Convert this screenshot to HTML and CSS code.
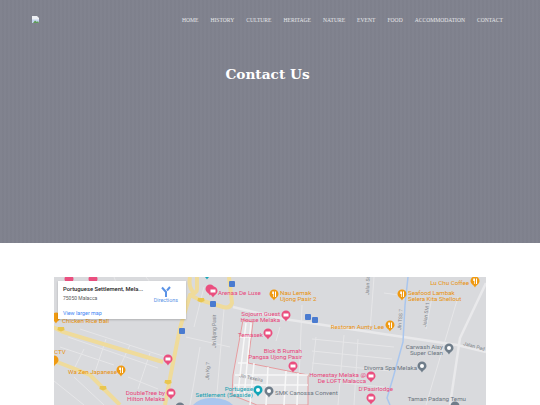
FILE: index.html
```html
<!DOCTYPE html>
<html lang="en">
<head>
<meta charset="utf-8">
<title>Contact Us</title>
<link rel="stylesheet" href="styles.css">
</head>
<body>
<header class="hero">
  <nav class="topbar">
    <svg class="logo" width="8" height="8" viewBox="0 0 8 8">
      <path d="M0 0h5l2 2v5H0z" fill="#eef0f4"/>
      <path d="M0 3.500h7V7H0z" fill="#c4d4ee"/>
      <path d="M1 7l2-2.500L5 6l1-1 1 2z" fill="#5f9a57"/>
    </svg>
    <ul class="menu">
      <li>HOME</li><li>HISTORY</li><li>CULTURE</li><li>HERITAGE</li><li>NATURE</li><li>EVENT</li><li>FOOD</li><li>ACCOMMODATION</li><li>CONTACT</li>
    </ul>
  </nav>
  <h1 class="title">Contact Us</h1>
</header>
<main class="content">
  <div class="map">
    <svg class="roads" width="432" height="128" viewBox="0 0 432 128">
      <defs>
        <path id="pin" d="M0 5.500 C-1 3 -4.500 2 -4.500 -1 A4.500 4.500 0 1 1 4.500 -1 C4.500 2 1 3 0 5.500z"/>
        <path id="bed" d="M-2.500 -2.500h5v3h-5z"/>
        <path id="fork" d="M-1.800 -3.500v2.500h.8v3h.7v-3h.3v-2.500zM1 -3.500h1v5.500h-1z"/>
        <path id="shield" d="M-3 -2h6l.6 3 -3.600 1.500 -3.600 -1.500z"/>
      </defs>
      <rect width="432" height="128" fill="#d9dadd"/>

      <!-- minor streets -->
      <g class="minor">
        <path d="M14 60 L104 91 M26 52 L112 80 M6 70 L60 88 M30 72 L20 92 M52 62 L40 98 M76 68 L62 98 M96 76 L84 112 M0 104 L30 128 M20 100 L50 128 M74 100 L104 112"/>
        <path d="M60 0 L66 16 M92 0 L100 10 M132 60 L176 70 M150 10 L140 50 M170 32 L162 128 M146 70 L136 128"/>
        <path d="M248 28 L244 128 M226 50 L222 64 M290 58 L284 128 M262 60 L258 96 M304 62 L300 128"/>
        <path d="M258 62 L340 70 M258 74 L338 82 M258 86 L336 94 M290 106 L330 110"/>
        <path d="M320 0 L316 54 M372 52 L378 20 M404 20 L372 128 M330 16 L345 18"/>
      </g>
      <!-- main grey roads -->
      <g class="major">
        <path d="M179 30 L230 42 L296 52 L336 58 L403 68 L432 75"/>
        <path d="M432 6 L406 61 L396 128"/>
      </g>

      <!-- settlement block -->
      <path class="block" d="M189 43 L199 45 L194 86 L254 98 V128 H203 L178 118 L179 98z"/>
      <g class="street-w">
        <path d="M192 46 L184 116 M197 46 L190 120 M186 60 H197 M184 86 H194 M181 98 H254 M180 108 H254 M200 86 L196 128 M214 90 L212 128 M232 94 L230 128 M244 96 L243 128"/>
      </g>

      <!-- water -->
      <path class="river" d="M354 0 L351 28 L349 65 L339 101 L333 121 L336 128"/>
      <path class="lake" d="M139 128 Q146 120 160 121 Q174 122 179 128z"/>

      <!-- yellow roads -->
      <g class="hwy">
        <path d="M-2 50 Q2 51 9 55 L109 85"/>
        <path d="M-2 83 L11 88 L36 98 L56 118 L66 128"/>
        <path d="M143 0 V12 Q143 16 136 18 L126 51 L118 91 L111 128"/>
        <path d="M136 18 L146 23 L169 30 Q176 32 178 26 L175 0"/>
        <path d="M136 0 Q134 10 140 16"/>
      </g>
      <g fill="#e9c64f">
        <use href="#shield" x="7" y="52"/><use href="#shield" x="147" y="23"/><use href="#shield" x="114" y="105"/><use href="#shield" x="49" y="111"/>
      </g>

      <!-- transit squares -->
      <g fill="#4a7bd0">
        <rect x="175" y="4" width="6" height="6" rx="1"/><rect x="156" y="24" width="6" height="6" rx="1"/>
        <rect x="125" y="51" width="6" height="6" rx="1"/><rect x="251" y="37" width="6" height="6" rx="1"/><rect x="258" y="40" width="6" height="6" rx="1"/>
      </g>

      <!-- pins -->
      <g fill="#ea4f7f">
        <use href="#pin" x="15" y="3"/><use href="#pin" x="39" y="3"/><use href="#pin" x="156" y="13"/>
        <use href="#pin" x="114" y="83"/><use href="#pin" x="117" y="117"/><use href="#pin" x="159" y="15"/>
        <use href="#pin" x="232" y="39"/><use href="#pin" x="214" y="57"/><use href="#pin" x="239" y="90"/>
        <use href="#pin" x="317" y="100"/><use href="#pin" x="317" y="122"/>
      </g>
      <g fill="#fff">
        <use href="#bed" x="114" y="83"/><use href="#bed" x="117" y="117"/><use href="#bed" x="159" y="15"/>
        <use href="#bed" x="232" y="39"/><use href="#bed" x="214" y="57"/><use href="#bed" x="239" y="90"/>
        <use href="#bed" x="317" y="100"/><use href="#bed" x="317" y="122"/>
      </g>
      <g fill="#ef9a12">
        <use href="#pin" x="2" y="41"/><use href="#pin" x="0" y="84"/><use href="#pin" x="67" y="94"/>
        <use href="#pin" x="220" y="18"/><use href="#pin" x="336" y="49"/><use href="#pin" x="348" y="18"/><use href="#pin" x="421" y="5"/>
      </g>
      <g fill="#fff">
        <use href="#fork" x="67" y="94"/><use href="#fork" x="220" y="18"/><use href="#fork" x="336" y="49"/><use href="#fork" x="348" y="18"/><use href="#fork" x="421" y="5"/>
      </g>
      <g fill="#6f7d8a">
        <use href="#pin" x="215" y="115"/><use href="#pin" x="395" y="72"/><use href="#pin" x="368" y="90"/><use href="#pin" x="401" y="130"/><use href="#pin" x="126" y="131"/>
      </g>
      <g fill="#12a5b8">
        <use href="#pin" x="204" y="114"/><use href="#pin" x="153" y="-3"/>
      </g>
      <g fill="#fff">
        <circle cx="215" cy="114" r="2"/><circle cx="395" cy="71" r="2"/><circle cx="368" cy="89" r="2"/><circle cx="204" cy="113" r="2"/>
      </g>

      <!-- labels -->
      <g class="lbl pink">
        <text x="164" y="18">Arenaa De Luxe</text>
        <text x="226" y="39" text-anchor="end">Sojourn Guest</text>
        <text x="226" y="45" text-anchor="end">House Melaka</text>
        <text x="209" y="60" text-anchor="end">Temasek</text>
        <text x="248" y="76" text-anchor="end">Blok B Rumah</text>
        <text x="248" y="82" text-anchor="end">Pangsa Ujong Pasir</text>
        <text x="312" y="100" text-anchor="end">Homestay Melaka @</text>
        <text x="312" y="106" text-anchor="end">De LOFT Malacca</text>
        <text x="339" y="114" text-anchor="end">D'Pasirlodge</text>
        <text x="111" y="118" text-anchor="end">DoubleTree by</text>
        <text x="111" y="124" text-anchor="end">Hilton Melaka</text>
      </g>
      <g class="lbl orange">
        <text x="226" y="18">Nau Lemak</text>
        <text x="226" y="24">Ujong Pasir 2</text>
        <text x="330" y="52" text-anchor="end">Restoran Aunty Lee</text>
        <text x="415" y="8" text-anchor="end">Lu Chu Coffee</text>
        <text x="354" y="18">Seafood Lambak</text>
        <text x="354" y="24">Selera Kita Shellout</text>
        <text x="14" y="97">Wa Zen Japanese</text>
        <text x="8" y="46">Chicken Rice Ball</text>
        <text x="0" y="77">CTV</text>
      </g>
      <g class="lbl teal">
        <text x="199" y="114" text-anchor="end">Portugese</text>
        <text x="199" y="120" text-anchor="end">Settlement (Seaside)</text>
      </g>
      <g class="lbl grey">
        <text x="221" y="118">SMK Canossa Convent</text>
        <text x="389" y="72" text-anchor="end">Carwash Aisy</text>
        <text x="389" y="78" text-anchor="end">Super Clean</text>
        <text x="363" y="93" text-anchor="end">Divorra Spa Melaka</text>
        <text x="412" y="124" text-anchor="end">Taman Padang Temu</text>
      </g>
      <g class="street">
        <text transform="translate(185 100) rotate(12)">Jln Texeira</text>
        <text transform="translate(409 68) rotate(15)">Jalan Pad</text>
        <text transform="translate(162 71) rotate(-90)">Jln Ujong Pasir</text>
        <text transform="translate(155 103) rotate(-88)">Jln Kg 7</text>
        <text transform="translate(347 53) rotate(-85)">Jln TSS 7</text>
        <text transform="translate(315 18) rotate(-88)">Jalan Sa</text>
        <text transform="translate(372 50) rotate(-82)">Jalan SM 1</text>
      </g>
    </svg>
    <div class="card">
      <div class="card-text">
        <div class="place">Portuguese Settlement, Mela...</div>
        <div class="addr">75050 Malacca</div>
        <a class="larger" href="#">View larger map</a>
      </div>
      <div class="dir">
        <svg width="10" height="11" viewBox="0 0 10 11"><path d="M1 1.500 L5 6 V11 M9 1 L6 4.500" fill="none" stroke="#5b93e6" stroke-width="2"/></svg>
        <span>Directions</span>
      </div>
    </div>
  </div>
</main>
</body>
</html>
```
FILE: styles.css
```css
* { box-sizing: border-box; }
html, body { margin: 0; padding: 0; background: #fff; overflow: hidden; }
body { height: 405px; font-family: "Liberation Serif", serif; }
.hero {
  height: 243px;
  padding: 16px 37px 0 32px;
  background-color: #80828e;
  background-image: repeating-linear-gradient(90deg, rgba(255,255,255,.012) 0 2px, rgba(0,0,0,.012) 2px 4px);
}
.topbar { display: flex; justify-content: space-between; align-items: flex-start; }
.logo { flex: none; display: block; }
.menu { list-style: none; display: flex; gap: 12px; margin: 0; padding: 0; font-size: 5.600px; line-height: 8px; color: #e6e7ea; }
.title { margin: 38px 0 0; text-align: center; font-family: "DejaVu Serif", serif; font-weight: 700; font-size: 13.700px; line-height: 24px; color: #fff; }
.content { padding: 34px 54px 0; }
.map { position: relative; height: 128px; overflow: hidden; }
.roads { display: block; }
.minor { fill: none; stroke: #e6e6e8; stroke-width: 1; }
.major { fill: none; stroke: #e9e9eb; stroke-width: 2.500; }
.block { fill: #e3e3e5; stroke: #e88b8f; stroke-width: .8; }
.street-w { fill: none; stroke: #f8f8f8; stroke-width: 1.500; }
.river { fill: none; stroke: #a9c6ee; stroke-width: 1.500; }
.lake { fill: #a9c6ee; }
.hwy { fill: none; stroke: #efdb9b; stroke-width: 4; }
.lbl text { font-family: Roboto, sans-serif; font-size: 6.200px; }
.pink text { fill: #e8457b; }
.orange text { fill: #e8910c; }
.teal text { fill: #129eb0; }
.grey text { fill: #6b7580; }
.street text { font-family: Roboto, sans-serif; font-size: 5px; fill: #7d8288; }
.card {
  position: absolute; left: 4px; top: 4px; width: 128px; height: 38px;
  background: #fff; display: flex; justify-content: space-between; font-family: Roboto, sans-serif;
  padding: 4px 8px 0 5px; box-shadow: 0 1px 2px rgba(0,0,0,.2);
}
.place { font-size: 5.800px; font-weight: 500; line-height: 8px; color: #222; white-space: nowrap; }
.addr { font-size: 5px; line-height: 7px; color: #5b5b5b; margin-top: 2px; }
.larger { display: block; font-size: 5.400px; line-height: 7px; color: #4285f4; text-decoration: none; margin-top: 8px; }
.dir { display: flex; flex-direction: column; align-items: center; color: #5b93e6; font-size: 5.400px; line-height: 7px; padding-top: 1px; }
```
